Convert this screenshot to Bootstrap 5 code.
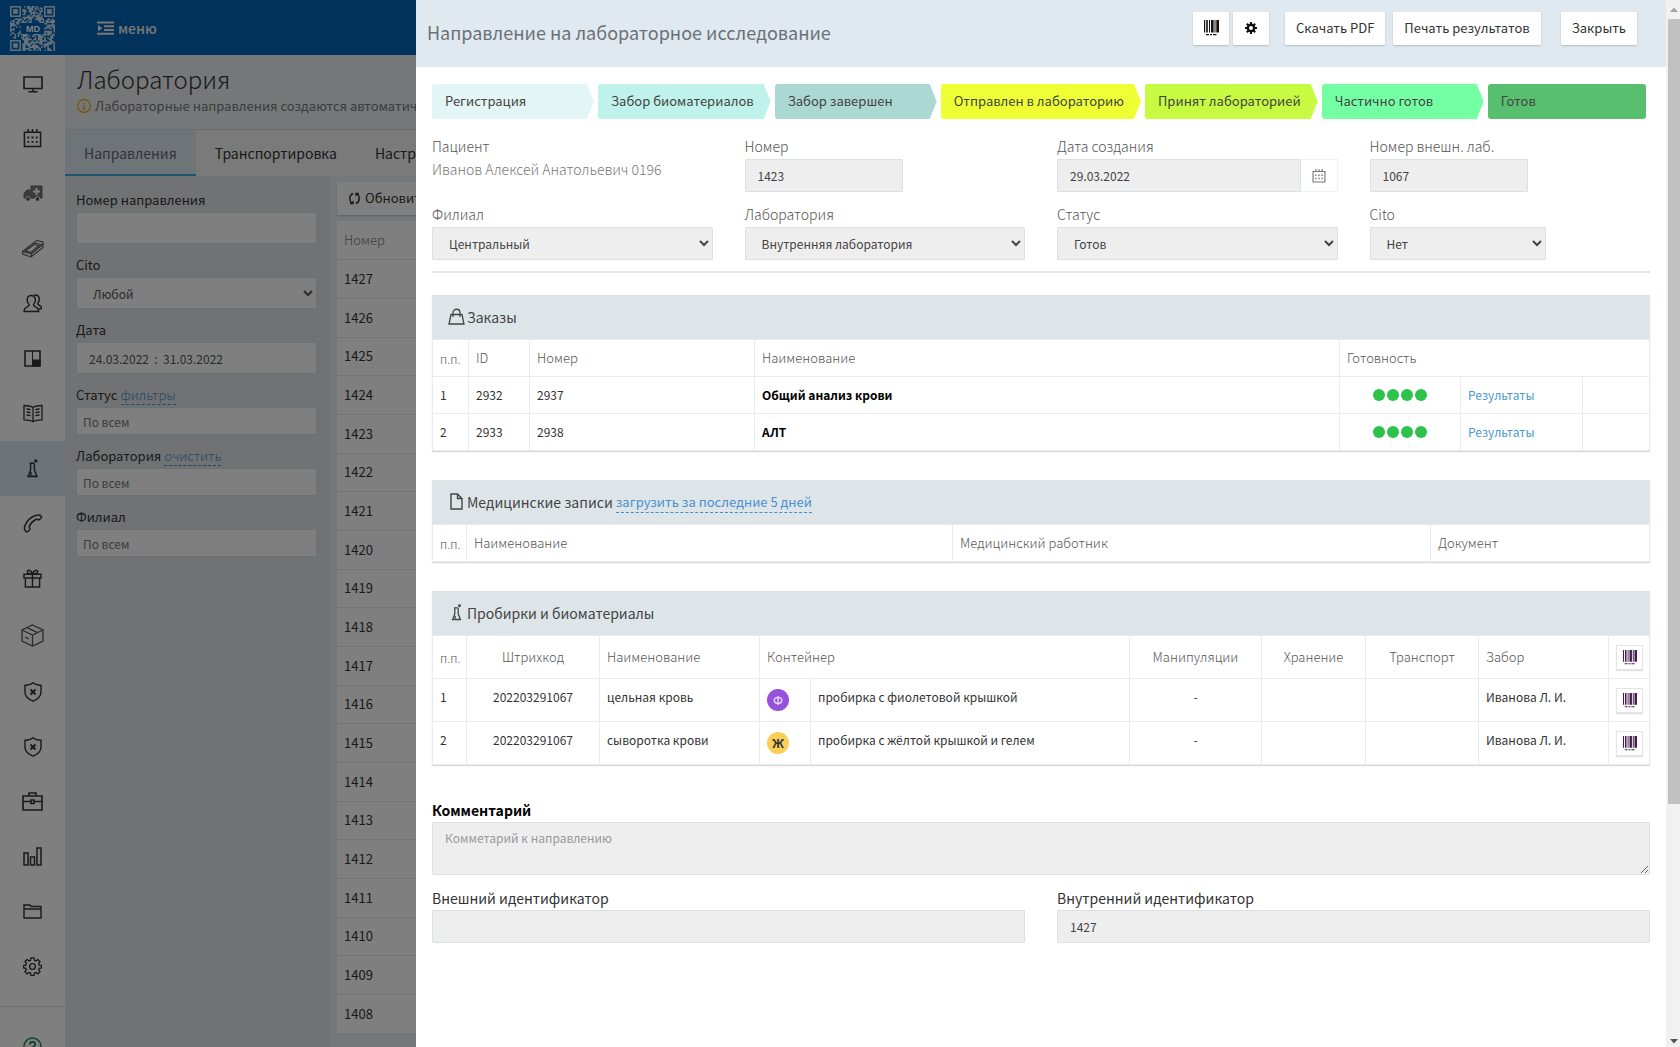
<!DOCTYPE html>
<html lang="ru">
<head>
<meta charset="utf-8">
<meta name="viewport" content="width=device-width, initial-scale=1">
<title>Лаборатория</title>
<link href="https://cdn.jsdelivr.net/npm/bootstrap@5.3.0/dist/css/bootstrap.min.css" rel="stylesheet">
<style>
body{font-family:"Noto Sans CJK SC","Noto Sans",sans-serif;font-size:14px;line-height:20px;color:#555;height:100vh;overflow:hidden;background:#fff}
svg{display:block;fill:none;stroke:currentColor}
.topbar{height:55px;background:#0064b8;color:#fff}
.brand{width:65px;height:56px;background:#0064b8}
.menu-btn{font-size:14px;font-weight:500;color:#eee;line-height:20px}
.side{width:65px;padding-top:1px;background:#fff;color:#222}
.side a{display:flex;align-items:center;justify-content:center;height:55px;color:#333}
.side a.tall{height:58px}
.side a.on{background:#dde7f2}
.side hr{margin:12px 0;color:#777}
.page-head{background:#eceff1;height:75px;border-bottom:1px solid #d8dcdf}
.page-head h1{font-size:24px;line-height:32px;font-weight:300;color:#333;margin:0 0 1px}
.hint{color:#777;font-size:13px;white-space:nowrap}
.hint svg{color:#eba800}
.tabs a{color:#333;text-decoration:none;padding:2px 19px 0;line-height:42px;border-bottom:2px solid transparent;white-space:nowrap}
.tabs a.on{color:#667;background:#dfe8f2;border-color:#3aa9e0}
.tabs{background:#f4f5f6;height:46px}
.filters{width:265px;background:#e2e4e8;padding:12px 13px 0 11px}
.filters label{color:#333;font-size:13px;line-height:24px;display:inline-block}
.filters .grp{margin-bottom:9px}
.filters .dash{font-size:13px;font-weight:300}
.dash{color:#4a90cf;text-decoration:none;border-bottom:1px dashed #3f8fd0}
.fld{display:block;width:100%;height:33px;border:1px solid #dbe0e3;border-radius:1px;background-color:#fff;color:#555;font-size:12px;line-height:20px;padding:0 12px}
select.fld{appearance:auto;padding:0 0 0 12px}
.filters .fld{height:32px}
.filters .fld.low{height:28px;padding:0 6px}
.fld:disabled{background-color:#eee;color:#444;opacity:1;-webkit-text-fill-color:#444}
.fld::placeholder{color:#999;opacity:1;-webkit-text-fill-color:#999}
.low::placeholder{color:#777;-webkit-text-fill-color:#777}
.list-col{background:#eceff1;padding:6px 0 0 7px;min-width:0}
.flat{background:#fff;border:0;border-radius:1px;box-shadow:0 1px 2px rgba(0,0,0,.2);color:#333;font-size:13px;line-height:20px;padding:6px 11px 7px;white-space:nowrap}
.nums{--bs-table-bg:#fff;margin:6px 0 0;color:#333;font-size:13px}
.nums td,.nums th{padding:0 7px;height:39px;vertical-align:middle;border-bottom:1px solid #e6e8ea;color:#333}
.nums th{font-weight:300;height:38px;color:#777}
.nums tr:nth-child(3n) td{height:38px}
.drawer.offcanvas{width:calc(100% - 416px);border:0;flex-direction:row;color:#444;transition:none}
.drawer-main{background:#fff}
.drawer-head{background:#e0e9f0;height:67px;padding:12px 29px 0 11px}
.drawer-head h2{font-size:18px;line-height:24px;font-weight:400;color:#6b7177;margin:8px 0 0}
.flat.sq{padding:0 0 2px;width:36px;height:33px;display:flex;align-items:center;justify-content:center;color:#111}
.steps{gap:4px;padding:17px 16px 0;font-size:13px}
.step{height:35px;line-height:21px;padding:6px 17px 8px 13px;min-width:162px;border-radius:3px;color:#444;clip-path:polygon(0 0,calc(100% - 7px) 0,100% 50%,calc(100% - 7px) 100%,0 100%);white-space:nowrap}
.step.end{clip-path:none;min-width:158px}
.form-grid{--bs-gutter-x:32px;margin:0;padding-top:12px}
.form-grid.first{padding-top:17px}
.lbl{display:block;font-weight:300;line-height:20px;margin-bottom:3px;color:#555}
.who{color:#777}
.short{width:158px}.mid{width:176px}
.cal{width:37px;border:1px solid #edf1f2;border-left:0;background:#fff;color:#777;padding:0}
.rule{margin:11px 16px 22px;border-top:2px solid #e3e5e7;opacity:1}
.panelx{margin:0 16px 29px;box-shadow:0 1px 1px rgba(0,0,0,.15)}
.panelx h3{margin:0;background:#dde5e9;height:44px;line-height:44px;padding-left:16px;font-size:14px;font-weight:400;color:#444;display:flex;align-items:center}
.panelx h3 svg{margin:0 2px 2px 0}
.panelx h3 .dash{font-size:13px;line-height:20px;margin-left:3px}
.grid{table-layout:fixed;margin:0;font-size:12px;line-height:20px;--bs-table-bg:#fff;border:1px solid #e9ecee}
.grid td,.grid th{padding:0 7px;border:1px solid #e9ecee;vertical-align:middle;color:#333;white-space:nowrap}
.grid th{font-weight:300;font-size:13px;color:#555}
.grid tr{height:37px}
.grid .fw-bold{color:#000}
.grid.tubes tr{height:43px}
.tubes td{padding-bottom:6px}
.tubes td.pb-0x{padding-bottom:0}
.grid .pp{padding-right:0;padding-top:2px;font-size:12px}
.dots{display:flex;gap:2px;justify-content:center}
.dots i{width:12px;height:12px;border-radius:50%;background:#2cc24c}
.tube{width:22px;height:22px;border-radius:50%;color:#e6d8f8;background:#9550dc;font-size:12px;line-height:22px;text-align:center;font-weight:500}
.tube.y{background:#fbcf57;color:#333;font-weight:700}
.mini{width:27px;height:25px;border:1px solid #e3e5e8;background:#fff;box-shadow:0 1px 1px rgba(0,0,0,.12);padding:0;display:flex;align-items:center;justify-content:center;color:#43204a}
.lblb{display:block;line-height:23px;color:#333}
.note{padding-top:5px}
.note textarea{height:53px;padding:5px 12px}
.scroller{width:14px;background:#f1f1f1;color:#a3a3a3}
.scroller b{width:12px;height:75vh;background:#c1c1c1;align-self:flex-end}
</style>
</head>
<body>
<svg width="0" height="0" class="position-absolute" aria-hidden="true">
<symbol id="barcode" viewBox="0 0 16 16"><g fill="currentColor" stroke="none"><path d="M1 0h1.200v12.500H1zM3.200 0h1.600v12.500H3.200zM6 0h1v12.500H6zM8 0h2.600v12.500H8zM11.500 0h1v12.500h-1zM13.300 0H16v12.500h-2.700zM3 14h3v1.200H3zM7 14h2v1.200H7zM10 14h3.500v1.200H10z"/></g></symbol>
<symbol id="calendar" viewBox="0 0 20 20"><path d="M1.500 3.500h17v15h-17zM5.500 0v4M10 0v4M14.500 0v4" stroke-width="1.600"/><path d="M4.500 9h2M9 9h2m2.500 0h2M4.500 13.500h2m2.500 0h2m2.500 0h2" stroke-width="2"/></symbol>
<symbol id="flask" viewBox="0 0 20 20"><path d="M7 4.500h5M8 5v6.500L5.500 18h9L12 11.500V5M8.500 14v3M4.500 18.500h11" stroke-width="1.500"/><circle cx="13.500" cy="2" r="1.700" fill="currentColor" stroke="none"/></symbol>
<symbol id="shield" viewBox="0 0 20 20"><path d="M10 .8C7.500 3 4.500 3.200 2 3.300V10c0 5 4 7.500 8 9.200 4-1.700 8-4.200 8-9.200V3.300C15.500 3.200 12.500 3 10 .8z" stroke-width="1.400"/><path d="M7.500 7.500l5 5m0-5l-5 5" stroke-width="1.800"/></symbol>
</svg>
<div class="d-flex flex-column h-100">
 <header class="d-flex topbar flex-shrink-0">
  <div class="brand d-flex align-items-center justify-content-center"><svg id="logo" width="45" height="45" viewBox="0 0 45 45" role="img" aria-label="MD"></svg></div>
  <button class="btn menu-btn d-flex align-items-center gap-1 ms-3 ps-3 border-0" type="button"><svg width="17" height="14" viewBox="0 0 17 14"><path d="M0 1.500h17M7 5.300h10M7 9h10M0 12.700h17" stroke-width="2"/><path d="M1 4l4.500 3.200L1 10.300z" fill="currentColor" stroke="none"/></svg>меню</button>
 </header>
 <div class="d-flex flex-grow-1" style="min-height:0">
  <nav class="side flex-shrink-0 overflow-hidden">
   <a href="#" aria-label="Рабочий стол"><svg width="20" height="20" viewBox="0 0 20 20"><path d="M1 3h18v11.500H1zM10 14.500V18M5.500 17.800h9" stroke-width="1.600"/></svg></a>
   <a href="#" aria-label="Расписание"><svg width="19" height="19"><use href="#calendar"/></svg></a>
   <a href="#" aria-label="Скорая"><svg width="20" height="18" viewBox="0 0 20 18"><path d="M8 1h11v12H8zM7.500 5H4L1 8.500V13h7" fill="#777" stroke="#666"/><path d="M13.500 3v7M10 6.500h7" stroke="#fff" stroke-width="2"/><circle cx="5" cy="14" r="2.300" fill="#555" stroke="#fff"/><circle cx="14.500" cy="14" r="2.300" fill="#555" stroke="#fff"/></svg></a>
   <a href="#" aria-label="Касса"><svg width="24" height="20" viewBox="0 0 24 20"><path d="M1.500 12.500L12.500 4l9 1.500L10.500 15zM1.500 12.500V15l8.500 3 12-9.500-.5-3M10.500 15l-.5 3M4.500 12L13 5.500l5 1-8 6.800zM12.500 4l3.500-2.500 6 1.500.5 2.500" stroke="#555" stroke-width="1.100"/></svg></a>
   <a href="#" aria-label="Пациенты"><svg width="19" height="19" viewBox="0 0 20 20"><path d="M8.500 1.500C5.500 1.500 4 4 4.500 7c.3 2 1 3.500 2 4.300 0 1.500-1 1.700-3 2.700-1.700.8-2.300 1.500-2.500 4.500h15.500c0-3-.8-3.700-2.500-4.500-2-1-3-1.200-3-2.700 1-.8 1.700-2.300 2-4.300.4-3-1.500-5.500-4.500-5.500z" stroke-width="1.500"/><path d="M11 1.500c3.500-1.300 6.500.5 6.200 4.500-.2 1.800-.8 3-1.700 3.900 0 1.400 1 1.600 2 2.100 1.300.6 1.800 1.500 2 3.500h-3" stroke-width="1.500"/></svg></a>
   <a href="#" aria-label="Доска"><svg width="17" height="17" viewBox="0 0 17 17"><path d="M1 1h15v15H1z" stroke-width="1.600"/><path d="M8.500 1v15M9 10h7v6H9z" fill="currentColor"/></svg></a>
   <a href="#" aria-label="Справочники"><svg width="20" height="19" viewBox="0 0 20 19"><path d="M10 3.500C7.500 1.800 4 1.500 1 1.500v14.300c3 0 6.500.3 9 2 2.500-1.700 6-2 9-2V1.500c-3 0-6.500.3-9 2zM10 3.500v14M3.500 5c1.500 0 3 .2 4 .8M3.500 8c1.500 0 3 .2 4 .8M3.500 11c1.500 0 3 .2 4 .8M16.500 5c-1.500 0-3 .2-4 .8M16.500 8c-1.500 0-3 .2-4 .8M16.500 11c-1.500 0-3 .2-4 .8" stroke-width="1.300"/></svg></a>
   <a href="#" class="on" aria-label="Лаборатория"><svg width="19" height="19"><use href="#flask"/></svg></a>
   <a href="#" aria-label="Звонки"><svg width="20" height="19" viewBox="0 0 20 19"><path d="M12.500 1.500c2.500-.8 4.500-.5 5.800.8.800 1-1.800 4-3 3.500-1-.3-1.500-.8-2.500-.3C10 7 7.500 9.500 6.300 12.200c-.4 1 .3 1.500.6 2.500.3 1.400-2.600 3.800-3.800 3C1 16 1.200 13.500 2 11.500 4 7 8 3 12.500 1.500z" stroke-width="1.500"/></svg></a>
   <a href="#" aria-label="Акции"><svg width="19" height="19" viewBox="0 0 20 20"><path d="M1 5.500h18v4H1zM2.500 9.500h15V19h-15zM10 5.500V19M10 5.500C8 5.500 4 4.500 4.500 2.500S9 1 10 5.500c1-4.500 5-5 5.500-3S12 5.500 10 5.500z" stroke-width="1.500"/></svg></a>
   <a href="#" class="tall" aria-label="Склад"><svg width="23" height="23" viewBox="0 0 23 23"><path d="M11.500 1L22 6v11l-10.500 5L1 17V6zM1 6l10.500 5L22 6M11.500 11v11M6 3.600l10.500 5M4 13l4 2" stroke="#555" stroke-width="1.300"/></svg></a>
   <a href="#" aria-label="Страховые"><svg width="20" height="20"><use href="#shield"/></svg></a>
   <a href="#" aria-label="Полисы"><svg width="20" height="20"><use href="#shield"/></svg></a>
   <a href="#" aria-label="Портфель"><svg width="21" height="19" viewBox="0 0 21 19"><path d="M1 4h19v14H1zM7 4V1h7v3M1 9.500h7.500m4 0H20M9 8h3v3.500H9z" stroke-width="1.600"/></svg></a>
   <a href="#" aria-label="Отчёты"><svg width="19" height="19" viewBox="0 0 19 19"><path d="M1 6h4v12H1zM7.500 10h4v8h-4zM14 1h4v17h-4z" stroke-width="1.500"/></svg></a>
   <a href="#" aria-label="Файлы"><svg width="19" height="15" viewBox="0 0 19 15"><path d="M1 14V1h6l1 1.500h10V14zM1 5h17" stroke-width="1.400"/></svg></a>
   <a href="#" aria-label="Настройки"><svg width="19" height="19" viewBox="0 0 20 20"><path d="M8.400 1h3.200l.5 2.500 1.500.6 2.100-1.400 2.200 2.200-1.400 2.100.6 1.500 2.500.5v2.400l-2.500.5-.6 1.500 1.400 2.100-2.200 2.200-2.100-1.400-1.500.6-.5 2.500H8.400l-.5-2.500-1.500-.6-2.100 1.400-2.200-2.200 1.400-2.100-.6-1.500L.6 11.400V9l2.400-.5L3.500 7 2.100 4.900l2.200-2.200 2.100 1.400 1.500-.6z" stroke-width="1.400"/><circle cx="10" cy="10" r="3" stroke-width="1.400"/></svg></a>
   <hr>
   <a href="#" class="text-success" aria-label="Помощь"><svg width="19" height="19" viewBox="0 0 19 19"><circle cx="9.500" cy="9.500" r="8.500" stroke-width="1.500"/><path d="M6.800 7.500c0-3.500 5.500-3.500 5.500 0 0 2-2.800 2-2.800 4M9.500 13v2" stroke-width="1.700"/></svg></a>
  </nav>
  <main class="flex-grow-1 d-flex flex-column overflow-hidden">
   <div class="page-head flex-shrink-0 px-2 pt-2"><div class="ps-1">
    <h1>Лаборатория</h1>
    <div class="hint d-flex align-items-center"><svg class="me-1" width="14" height="14" viewBox="0 0 15 15"><circle cx="7.500" cy="7.500" r="6.800" stroke-width="1.200"/><path d="M7.500 4v1.500M7.500 6.500V11M6 11h3" stroke-width="1.300"/></svg>Лабораторные направления создаются автоматически</div></div>
   </div>
   <nav class="tabs d-flex flex-shrink-0"><a href="#" class="on">Направления</a><a href="#">Транспортировка</a><a href="#">Настройки</a></nav>
   <div class="d-flex flex-grow-1" style="min-height:0">
    <form class="filters flex-shrink-0">
     <div class="grp"><label for="f1">Номер направления</label><input class="fld" id="f1"></div>
     <div class="grp"><label for="f2">Cito</label><select class="fld" id="f2"><option>Любой</option></select></div>
     <div class="grp"><label for="f3">Дата</label><input class="fld" id="f3" value="24.03.2022  :  31.03.2022"></div>
     <div class="grp"><label for="f4">Статус</label> <a href="#" class="dash">фильтры</a><input class="fld low" id="f4" placeholder="По всем"></div>
     <div class="grp"><label for="f5">Лаборатория</label> <a href="#" class="dash">очистить</a><input class="fld low" id="f5" placeholder="По всем"></div>
     <div class="grp"><label for="f6">Филиал</label><input class="fld low" id="f6" placeholder="По всем"></div>
    </form>
    <div class="list-col flex-grow-1 overflow-hidden">
     <button type="button" class="flat d-flex align-items-center gap-1"><svg width="13" height="13" viewBox="0 0 13 13"><path d="M5 1.500C1 3 .5 9 4.500 11.500M2 11.500h3V9M8 11.500C12 10 12.500 4 8.500 1.500M11 1.500H8V4" stroke-width="1.400"/></svg>Обновить</button>
     <table class="table nums"><thead><tr><th>Номер</th></tr></thead><tbody id="nums"></tbody></table>
    </div>
   </div>
  </main>
 </div>
</div>
<div class="offcanvas-backdrop show"></div>
<section class="offcanvas offcanvas-end show drawer" data-bs-backdrop="false" data-bs-scroll="true" tabindex="-1" aria-labelledby="dt">
 <div class="drawer-main flex-grow-1 overflow-hidden">
  <header class="drawer-head d-flex align-items-start">
   <h2 id="dt" class="me-auto">Направление на лабораторное исследование</h2>
   <button class="flat sq me-1" aria-label="Штрихкод"><svg width="16" height="16"><use href="#barcode"/></svg></button>
   <button class="flat sq me-3" aria-label="Настройки"><svg width="12" height="12" viewBox="0 0 12 12"><circle cx="6" cy="6" r="3.200" stroke-width="2.400"/><path d="M6 0v2.500M6 9.500V12M0 6h2.500M9.500 6H12M1.800 1.800l1.700 1.700M8.500 8.500l1.700 1.700M1.800 10.200l1.700-1.700M8.500 3.500l1.700-1.700" stroke-width="2"/></svg></button>
   <button class="flat me-2">Скачать PDF</button>
   <button class="flat me-3">Печать результатов</button>
   <button class="flat ms-1">Закрыть</button>
  </header>
  <div class="steps d-flex">
   <div class="step" style="background:#e4f5f5">Регистрация</div>
   <div class="step" style="background:#bff2ea">Забор биоматериалов</div>
   <div class="step" style="background:#abd8d3">Забор завершен</div>
   <div class="step" style="background:#eeff33">Отправлен в лабораторию</div>
   <div class="step" style="background:#c6fb42">Принят лабораторией</div>
   <div class="step" style="background:#74ffa5">Частично готов</div>
   <div class="step end" style="background:#57bf6e">Готов</div>
  </div>
  <div class="row form-grid first">
   <div class="col-3"><span class="lbl">Пациент</span><div class="lbl who">Иванов Алексей Анатольевич 0196</div></div>
   <div class="col-3"><label class="lbl" for="d1">Номер</label><input class="fld short" id="d1" value="1423" disabled></div>
   <div class="col-3"><label class="lbl" for="d2">Дата создания</label><div class="d-flex"><input class="fld" id="d2" value="29.03.2022" disabled><button class="cal d-flex align-items-center justify-content-center flex-shrink-0" aria-label="Календарь"><svg width="14" height="14"><use href="#calendar"/></svg></button></div></div>
   <div class="col-3"><label class="lbl" for="d3">Номер внешн. лаб.</label><input class="fld short" id="d3" value="1067" disabled></div>
  </div>
  <div class="row form-grid">
   <div class="col-3"><label class="lbl" for="d4">Филиал</label><select class="fld" id="d4" disabled><option>Центральный</option></select></div>
   <div class="col-3"><label class="lbl" for="d5">Лаборатория</label><select class="fld" id="d5" disabled><option>Внутренняя лаборатория</option></select></div>
   <div class="col-3"><label class="lbl" for="d6">Статус</label><select class="fld" id="d6" disabled><option>Готов</option></select></div>
   <div class="col-3"><label class="lbl" for="d7">Cito</label><select class="fld mid" id="d7" disabled><option>Нет</option></select></div>
  </div>
  <hr class="rule">
  <div class="panelx"><h3><svg width="17" height="17" viewBox="0 0 17 17"><path d="M3 6.500h11l2 9.500H1zM5 9V5c0-5 7-5 7 0v4" stroke-width="1.300"/></svg>Заказы</h3>
   <table class="table grid"><colgroup><col style="width:36px"><col style="width:61px"><col style="width:225px"><col><col style="width:121px"><col style="width:122px"><col style="width:67px"></colgroup>
    <thead><tr><th class="pp">п.п.</th><th>ID</th><th>Номер</th><th>Наименование</th><th colspan="3">Готовность</th></tr></thead>
    <tbody><tr><td>1</td><td>2932</td><td>2937</td><td class="fw-bold">Общий анализ крови</td><td><div class="dots"><i></i><i></i><i></i><i></i></div></td><td><a href="#" class="text-decoration-none" style="color:#4a9bd0">Результаты</a></td><td></td></tr>
    <tr><td>2</td><td>2933</td><td>2938</td><td class="fw-bold">АЛТ</td><td><div class="dots"><i></i><i></i><i></i><i></i></div></td><td><a href="#" class="text-decoration-none" style="color:#4a9bd0">Результаты</a></td><td></td></tr></tbody></table>
  </div>
  <div class="panelx"><h3><svg width="17" height="17" viewBox="0 0 17 17"><path d="M3 1h6.500L14 5.500V16H3zM9.500 1v4.500H14" stroke-width="1.400"/></svg>Медицинские записи <a href="#" class="dash">загрузить за последние 5 дней</a></h3>
   <table class="table grid"><colgroup><col style="width:34px"><col style="width:486px"><col><col style="width:219px"></colgroup>
    <thead><tr><th class="pp">п.п.</th><th>Наименование</th><th>Медицинский работник</th><th>Документ</th></tr></thead></table>
  </div>
  <div class="panelx"><h3><svg width="17" height="17"><use href="#flask"/></svg>Пробирки и биоматериалы</h3>
   <table class="table grid tubes"><colgroup><col style="width:34px"><col style="width:133px"><col style="width:160px"><col style="width:51px"><col><col style="width:132px"><col style="width:104px"><col style="width:113px"><col style="width:130px"><col style="width:41px"></colgroup>
    <thead><tr><th class="pp">п.п.</th><th class="text-center">Штрихкод</th><th>Наименование</th><th colspan="2">Контейнер</th><th class="text-center">Манипуляции</th><th class="text-center">Хранение</th><th class="text-center">Транспорт</th><th>Забор</th><th><button class="mini" aria-label="Печать всех"><svg width="15" height="15"><use href="#barcode"/></svg></button></th></tr></thead>
    <tbody><tr><td>1</td><td class="text-center">202203291067</td><td>цельная кровь</td><td class="pb-0x"><div class="tube">Ф</div></td><td>пробирка с фиолетовой крышкой</td><td class="text-center">-</td><td></td><td></td><td>Иванова Л. И.</td><td class="pb-0x"><button class="mini" aria-label="Печать"><svg width="15" height="15"><use href="#barcode"/></svg></button></td></tr>
    <tr><td>2</td><td class="text-center">202203291067</td><td>сыворотка крови</td><td class="pb-0x"><div class="tube y">Ж</div></td><td>пробирка с жёлтой крышкой и гелем</td><td class="text-center">-</td><td></td><td></td><td>Иванова Л. И.</td><td class="pb-0x"><button class="mini" aria-label="Печать"><svg width="15" height="15"><use href="#barcode"/></svg></button></td></tr></tbody></table>
  </div>
  <div class="note px-3"><label class="lblb fw-bold text-black" for="cm">Комментарий</label><textarea class="fld" id="cm" placeholder="Комметарий к направлению" disabled></textarea></div>
  <div class="row form-grid">
   <div class="col-6"><label class="lblb" for="e1">Внешний идентификатор</label><input class="fld" id="e1" disabled></div>
   <div class="col-6"><label class="lblb" for="e2">Внутренний идентификатор</label><input class="fld" id="e2" value="1427" disabled></div>
  </div>
 </div>
 <div class="scroller d-flex flex-column flex-shrink-0" aria-hidden="true">
  <svg width="14" height="19" viewBox="0 0 14 19"><path d="M4 12h8L8 7.500z" fill="#a3a3a3" stroke="none"/></svg><b></b>
  <svg class="mt-auto" width="14" height="14" viewBox="0 0 14 14"><path d="M4 6h8L8 10.500z" fill="#505050" stroke="none"/></svg>
 </div>
</section>
<script src="https://cdn.jsdelivr.net/npm/bootstrap@5.3.0/dist/js/bootstrap.bundle.min.js"></script>
<script>
let rows='';for(let n=1427;n>1407;n--)rows+='<tr><td>'+n+'</td></tr>';
document.getElementById('nums').innerHTML=rows;
/* logo: QR modules on a 29x29 grid with three finder squares and a clear centre */
const N=29,u=45/N;let d='',s=7;
for(let y=0;y<N;y++)for(let x=0;x<N;x++){
 s=(s*1103515245+12345)%2147483648;
 const corner=(x<8&&y<8)||(x>20&&y<8)||(x<8&&y>20),mid=x>6&&x<22&&y>10&&y<18;
 if(!corner&&!mid&&(s>>16)%5<3)d+=`M${x*u} ${y*u}h${u}v${u}h-${u}z`;
}
const f=(x,y)=>`<rect x="${x+.8}" y="${y+.8}" width="9.400" height="9.400" stroke="#fff" stroke-width="1.500"/><rect x="${x+3.200}" y="${y+3.200}" width="4.600" height="4.600" fill="#fff" stroke="none"/>`;
document.getElementById('logo').innerHTML='<g opacity=".8"><path fill="#fff" stroke="none" d="'+d+'"/>'+f(0,0)+f(34,0)+f(0,34)+'</g><text x="23" y="26" font-size="9" font-weight="700" text-anchor="middle" fill="#fff" stroke="none" font-family="Liberation Sans, sans-serif">MD</text>';
</script>
</body>
</html>
